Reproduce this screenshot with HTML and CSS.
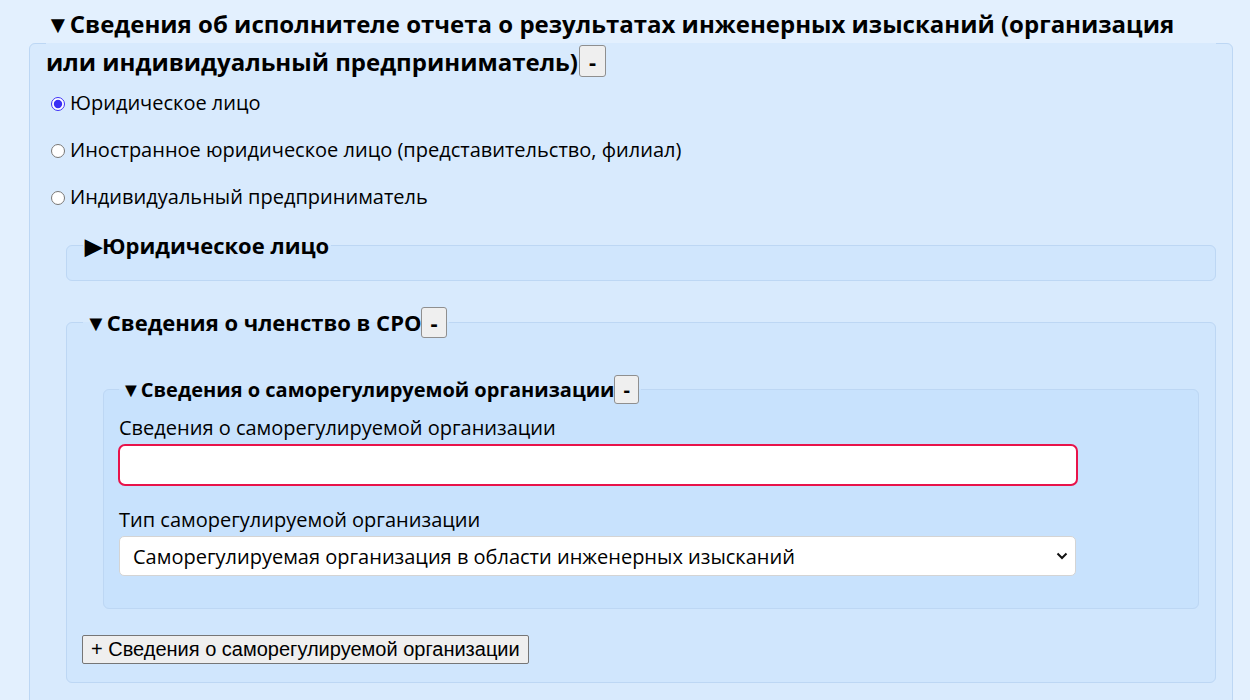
FILE: index.html
```html
<!DOCTYPE html>
<html lang="ru">
<head>
    <meta charset="UTF-8">
    <meta name="viewport" content="width=device-width, initial-scale=1.0">
    <title>Сведения об исполнителе</title>
    <link rel="stylesheet" href="styles.css">
</head>
<body>
    <fieldset class="block block-top">
        <legend class="legend-main">▼Сведения об исполнителе отчета о результатах инженерных изысканий (организация или индивидуальный предприниматель)<button class="toggle" type="button">-</button></legend>

        <label class="radio-row"><input type="radio" name="kind" checked>Юридическое лицо</label>
        <label class="radio-row"><input type="radio" name="kind">Иностранное юридическое лицо (представительство, филиал)</label>
        <label class="radio-row"><input type="radio" name="kind">Индивидуальный предприниматель</label>

        <fieldset class="block block-sub collapsed">
            <legend class="legend-sub">▶Юридическое лицо</legend>
        </fieldset>

        <fieldset class="block block-sub block-sro">
            <legend class="legend-sub">▼Сведения о членство в СРО<button class="toggle" type="button">-</button></legend>

            <fieldset class="block block-inner">
                <legend class="legend-inner">▼Сведения о саморегулируемой организации<button class="toggle" type="button">-</button></legend>

                <label class="field-label" for="sroInfo">Сведения о саморегулируемой организации</label>
                <input class="field-input invalid" type="text" id="sroInfo">

                <label class="field-label" for="sroType">Тип саморегулируемой организации</label>
                <div class="select-wrap">
                    <select class="field-select" id="sroType">
                        <option>Саморегулируемая организация в области инженерных изысканий</option>
                    </select>
                    <svg class="chevron" width="12" height="8" viewBox="0 0 12 8"><path d="M1.5 1.5 L6 6 L10.5 1.5" fill="none" stroke="#111" stroke-width="2"/></svg>
                </div>
            </fieldset>

            <button class="add-btn" type="button">+ Сведения о саморегулируемой организации</button>
        </fieldset>
    </fieldset>
</body>
</html>
```

FILE: styles.css
```css
:root {
    --page-bg: #e3f0fe;
    --block-bg: #d8eafd;
    --sub-bg: #d0e6fd;
    --inner-bg: #c8e2fd;
    --line: #bdd7f4;
}

body {
    font-family: 'Open Sans', 'Noto Sans', sans-serif;
    font-size: 20px;
    background: var(--page-bg);
    color: #000;
    margin: 0;
    padding: 5px 17px 0 29px;
}

.block {
    border: 1px solid var(--line);
    border-radius: 6px;
    margin: 0;
    padding: 8px 16px 0;
    min-width: 0;
}

.block-top {
    background: var(--block-bg);
    min-height: 700px;
}

.block-sub {
    background: var(--sub-bg);
    margin: 20px 0 0 20px;
}

.collapsed {
    padding-bottom: 12px;
}

.block-sro {
    margin-top: 26px;
    padding-top: 37px;
    padding-bottom: 18px;
}

.block-inner {
    background: var(--inner-bg);
    margin-left: 20px;
    padding: 10px 16px 32px 15px;
}

legend {
    padding: 0 2px;
    font-weight: bold;
}

.legend-main {
    font-size: 24px;
    line-height: 38px;
    padding-left: 0;
}

.legend-sub {
    font-size: 22px;
    line-height: 30px;
}

.legend-inner {
    font-size: 20px;
    line-height: 28px;
}

.toggle {
    font: inherit;
    background: #efefef;
    border: 1px solid #8f8f8f;
    border-radius: 3px;
    padding: 0 8px;
    vertical-align: middle;
    color: #000;
}

.legend-main .toggle {
    height: 32px;
    line-height: 26px;
    font-size: 22px;
    padding: 0 9px;
    margin-left: 1px;
    vertical-align: 1px;
}

.legend-sub .toggle {
    height: 31px;
    line-height: 25px;
    font-size: 22px;
    vertical-align: 0;
}

.legend-inner .toggle {
    height: 29px;
    line-height: 23px;
    font-size: 20px;
    padding: 0 8px;
    vertical-align: 0;
}

.radio-row {
    display: block;
    line-height: 27px;
    margin-bottom: 20px;
}

.radio-row input {
    accent-color: #3b2ff5;
    width: 14px;
    height: 14px;
    margin: 0 5px;
    vertical-align: -1px;
}

.field-label {
    display: block;
    line-height: 27px;
    margin-top: 0;
}

.field-input {
    display: block;
    box-sizing: border-box;
    width: 960px;
    height: 42px;
    margin: 3px 0 0 -1px;
    border: 2px solid #e8134a;
    border-radius: 7px;
    background: #fff;
    font: inherit;
    padding: 0 12px;
    outline: none;
}

.field-input + .field-label {
    margin-top: 20px;
}

.select-wrap {
    position: relative;
    width: 957px;
    margin-top: 3px;
}

.field-select {
    display: block;
    box-sizing: border-box;
    width: 100%;
    height: 40px;
    appearance: none;
    -webkit-appearance: none;
    border: 1px solid #d4d4d4;
    border-radius: 5px;
    background: #fff;
    font-family: inherit;
    font-size: 20px;
    color: #000;
    padding: 0 30px 0 13px;
}

.chevron {
    position: absolute;
    right: 8px;
    top: 16px;
    pointer-events: none;
}

.add-btn {
    display: block;
    margin: 26px 0 0 -1px;
    font-family: 'Liberation Sans', Arial, sans-serif;
    font-size: 20px;
    line-height: 23px;
    padding: 2px 8px;
    background: #efefef;
    border: 1px solid #767676;
    border-radius: 2px;
    color: #000;
}
```
